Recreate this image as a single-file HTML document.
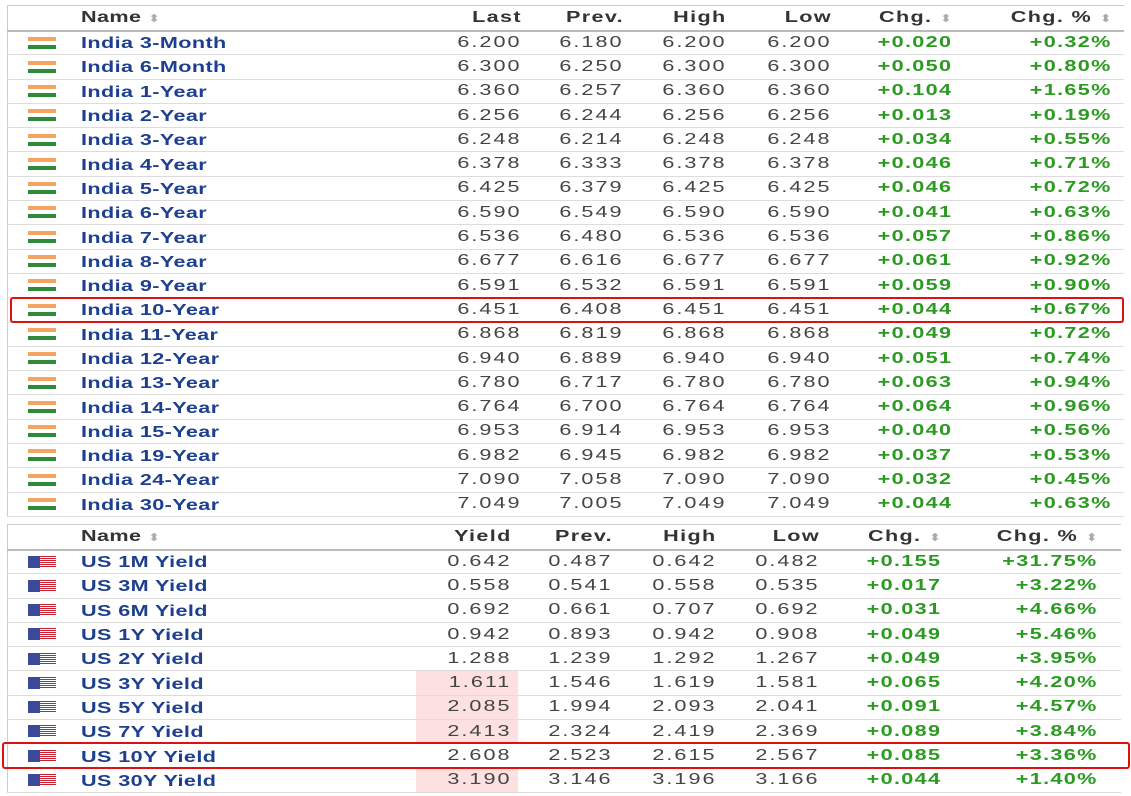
<!DOCTYPE html>
<html><head><meta charset="utf-8"><style>
body{margin:0;width:1131px;height:796px;background:#fff;position:relative;overflow:hidden;font-family:"Liberation Sans",Arial,sans-serif}
table{position:absolute;left:7px;border-collapse:collapse;table-layout:fixed;border-left:1px solid #ccc}
td,th{padding:0 6px 0 0;text-align:right;font-size:16px;letter-spacing:1.5px;color:#444;border-bottom:1px solid #ddd;white-space:nowrap;overflow:visible}
td i,th i{font-style:normal;display:inline-block;transform:scaleX(1.35);transform-origin:100% 50%}
th{font-weight:bold;color:#333;letter-spacing:1px;border-bottom:2px solid #bbb}
tr{height:24.3px}
td.n,th.n{text-align:left;padding:3px 0 0 8px;font-weight:bold;color:#1d3f8f;letter-spacing:0.3px}
td.n i,th.n i{transform-origin:0 50%}
th.n{color:#333;padding:0 0 0 8px}
td.g{color:#2a9a20;font-weight:bold;letter-spacing:1px}
td.f{padding:0 0 0 20px;text-align:left}
.s{color:#aaa;font-size:11px;letter-spacing:0;font-weight:normal}
.in{display:inline-block;width:28px;height:12px;background:linear-gradient(#f4a460 0,#f4a460 4px,#fff 4px,#fff 8px,#2e8b3a 8px);vertical-align:middle}
.us{display:inline-block;width:28px;height:12px;background:linear-gradient(90deg,#3b4a9a 0,#3b4a9a 12px,transparent 12px),repeating-linear-gradient(#c8202e 0,#c8202e 1px,#fff 1px,#fff 2px);vertical-align:middle}
.p{background:#fde0e0}
#t1{top:5px;border-top:1px solid #ccc}
#t2{top:524px;border-top:1px solid #ccc}
.box{position:absolute;border:2px solid #e01010}
</style></head><body>
<table id="t1">
<colgroup><col style="width:65px"><col style="width:348px"><col style="width:107px"><col style="width:102px"><col style="width:103px"><col style="width:105px"><col style="width:121px"><col style="width:159px"><col style="width:3px"></colgroup>
<tr style="height:25px"><th></th><th class="n"><i>Name <span class="s">⬍</span></i></th><th><i>Last</i></th><th><i>Prev.</i></th><th><i>High</i></th><th><i>Low</i></th><th><i>Chg. <span class="s">⬍</span></i></th><th><i>Chg. % <span class="s">⬍</span></i></th><th></th></tr>
<tr><td class="f"><span class="in"></span></td><td class="n"><i>India 3-Month</i></td><td><i>6.200</i></td><td><i>6.180</i></td><td><i>6.200</i></td><td><i>6.200</i></td><td class="g"><i>+0.020</i></td><td class="g"><i>+0.32%</i></td><td></td></tr>
<tr><td class="f"><span class="in"></span></td><td class="n"><i>India 6-Month</i></td><td><i>6.300</i></td><td><i>6.250</i></td><td><i>6.300</i></td><td><i>6.300</i></td><td class="g"><i>+0.050</i></td><td class="g"><i>+0.80%</i></td><td></td></tr>
<tr><td class="f"><span class="in"></span></td><td class="n"><i>India 1-Year</i></td><td><i>6.360</i></td><td><i>6.257</i></td><td><i>6.360</i></td><td><i>6.360</i></td><td class="g"><i>+0.104</i></td><td class="g"><i>+1.65%</i></td><td></td></tr>
<tr><td class="f"><span class="in"></span></td><td class="n"><i>India 2-Year</i></td><td><i>6.256</i></td><td><i>6.244</i></td><td><i>6.256</i></td><td><i>6.256</i></td><td class="g"><i>+0.013</i></td><td class="g"><i>+0.19%</i></td><td></td></tr>
<tr><td class="f"><span class="in"></span></td><td class="n"><i>India 3-Year</i></td><td><i>6.248</i></td><td><i>6.214</i></td><td><i>6.248</i></td><td><i>6.248</i></td><td class="g"><i>+0.034</i></td><td class="g"><i>+0.55%</i></td><td></td></tr>
<tr><td class="f"><span class="in"></span></td><td class="n"><i>India 4-Year</i></td><td><i>6.378</i></td><td><i>6.333</i></td><td><i>6.378</i></td><td><i>6.378</i></td><td class="g"><i>+0.046</i></td><td class="g"><i>+0.71%</i></td><td></td></tr>
<tr><td class="f"><span class="in"></span></td><td class="n"><i>India 5-Year</i></td><td><i>6.425</i></td><td><i>6.379</i></td><td><i>6.425</i></td><td><i>6.425</i></td><td class="g"><i>+0.046</i></td><td class="g"><i>+0.72%</i></td><td></td></tr>
<tr><td class="f"><span class="in"></span></td><td class="n"><i>India 6-Year</i></td><td><i>6.590</i></td><td><i>6.549</i></td><td><i>6.590</i></td><td><i>6.590</i></td><td class="g"><i>+0.041</i></td><td class="g"><i>+0.63%</i></td><td></td></tr>
<tr><td class="f"><span class="in"></span></td><td class="n"><i>India 7-Year</i></td><td><i>6.536</i></td><td><i>6.480</i></td><td><i>6.536</i></td><td><i>6.536</i></td><td class="g"><i>+0.057</i></td><td class="g"><i>+0.86%</i></td><td></td></tr>
<tr><td class="f"><span class="in"></span></td><td class="n"><i>India 8-Year</i></td><td><i>6.677</i></td><td><i>6.616</i></td><td><i>6.677</i></td><td><i>6.677</i></td><td class="g"><i>+0.061</i></td><td class="g"><i>+0.92%</i></td><td></td></tr>
<tr><td class="f"><span class="in"></span></td><td class="n"><i>India 9-Year</i></td><td><i>6.591</i></td><td><i>6.532</i></td><td><i>6.591</i></td><td><i>6.591</i></td><td class="g"><i>+0.059</i></td><td class="g"><i>+0.90%</i></td><td></td></tr>
<tr><td class="f"><span class="in"></span></td><td class="n"><i>India 10-Year</i></td><td><i>6.451</i></td><td><i>6.408</i></td><td><i>6.451</i></td><td><i>6.451</i></td><td class="g"><i>+0.044</i></td><td class="g"><i>+0.67%</i></td><td></td></tr>
<tr><td class="f"><span class="in"></span></td><td class="n"><i>India 11-Year</i></td><td><i>6.868</i></td><td><i>6.819</i></td><td><i>6.868</i></td><td><i>6.868</i></td><td class="g"><i>+0.049</i></td><td class="g"><i>+0.72%</i></td><td></td></tr>
<tr><td class="f"><span class="in"></span></td><td class="n"><i>India 12-Year</i></td><td><i>6.940</i></td><td><i>6.889</i></td><td><i>6.940</i></td><td><i>6.940</i></td><td class="g"><i>+0.051</i></td><td class="g"><i>+0.74%</i></td><td></td></tr>
<tr><td class="f"><span class="in"></span></td><td class="n"><i>India 13-Year</i></td><td><i>6.780</i></td><td><i>6.717</i></td><td><i>6.780</i></td><td><i>6.780</i></td><td class="g"><i>+0.063</i></td><td class="g"><i>+0.94%</i></td><td></td></tr>
<tr><td class="f"><span class="in"></span></td><td class="n"><i>India 14-Year</i></td><td><i>6.764</i></td><td><i>6.700</i></td><td><i>6.764</i></td><td><i>6.764</i></td><td class="g"><i>+0.064</i></td><td class="g"><i>+0.96%</i></td><td></td></tr>
<tr><td class="f"><span class="in"></span></td><td class="n"><i>India 15-Year</i></td><td><i>6.953</i></td><td><i>6.914</i></td><td><i>6.953</i></td><td><i>6.953</i></td><td class="g"><i>+0.040</i></td><td class="g"><i>+0.56%</i></td><td></td></tr>
<tr><td class="f"><span class="in"></span></td><td class="n"><i>India 19-Year</i></td><td><i>6.982</i></td><td><i>6.945</i></td><td><i>6.982</i></td><td><i>6.982</i></td><td class="g"><i>+0.037</i></td><td class="g"><i>+0.53%</i></td><td></td></tr>
<tr><td class="f"><span class="in"></span></td><td class="n"><i>India 24-Year</i></td><td><i>7.090</i></td><td><i>7.058</i></td><td><i>7.090</i></td><td><i>7.090</i></td><td class="g"><i>+0.032</i></td><td class="g"><i>+0.45%</i></td><td></td></tr>
<tr><td class="f"><span class="in"></span></td><td class="n"><i>India 30-Year</i></td><td><i>7.049</i></td><td><i>7.005</i></td><td><i>7.049</i></td><td><i>7.049</i></td><td class="g"><i>+0.044</i></td><td class="g"><i>+0.63%</i></td><td></td></tr>
</table>

<table id="t2">
<colgroup><col style="width:65px"><col style="width:343px"><col style="width:102px"><col style="width:101px"><col style="width:104px"><col style="width:103px"><col style="width:122px"><col style="width:156px"><col style="width:17px"></colgroup>
<tr style="height:25px"><th></th><th class="n"><i>Name <span class="s">⬍</span></i></th><th><i>Yield</i></th><th><i>Prev.</i></th><th><i>High</i></th><th><i>Low</i></th><th><i>Chg. <span class="s">⬍</span></i></th><th><i>Chg. % <span class="s">⬍</span></i></th><th></th></tr>
<tr><td class="f"><span class="us"></span></td><td class="n"><i>US 1M Yield</i></td><td><i>0.642</i></td><td><i>0.487</i></td><td><i>0.642</i></td><td><i>0.482</i></td><td class="g"><i>+0.155</i></td><td class="g"><i>+31.75%</i></td><td></td></tr>
<tr><td class="f"><span class="us"></span></td><td class="n"><i>US 3M Yield</i></td><td><i>0.558</i></td><td><i>0.541</i></td><td><i>0.558</i></td><td><i>0.535</i></td><td class="g"><i>+0.017</i></td><td class="g"><i>+3.22%</i></td><td></td></tr>
<tr><td class="f"><span class="us"></span></td><td class="n"><i>US 6M Yield</i></td><td><i>0.692</i></td><td><i>0.661</i></td><td><i>0.707</i></td><td><i>0.692</i></td><td class="g"><i>+0.031</i></td><td class="g"><i>+4.66%</i></td><td></td></tr>
<tr><td class="f"><span class="us"></span></td><td class="n"><i>US 1Y Yield</i></td><td><i>0.942</i></td><td><i>0.893</i></td><td><i>0.942</i></td><td><i>0.908</i></td><td class="g"><i>+0.049</i></td><td class="g"><i>+5.46%</i></td><td></td></tr>
<tr><td class="f"><span class="us"></span></td><td class="n"><i>US 2Y Yield</i></td><td><i>1.288</i></td><td><i>1.239</i></td><td><i>1.292</i></td><td><i>1.267</i></td><td class="g"><i>+0.049</i></td><td class="g"><i>+3.95%</i></td><td></td></tr>
<tr><td class="f"><span class="us"></span></td><td class="n"><i>US 3Y Yield</i></td><td class="p"><i>1.611</i></td><td><i>1.546</i></td><td><i>1.619</i></td><td><i>1.581</i></td><td class="g"><i>+0.065</i></td><td class="g"><i>+4.20%</i></td><td></td></tr>
<tr><td class="f"><span class="us"></span></td><td class="n"><i>US 5Y Yield</i></td><td class="p"><i>2.085</i></td><td><i>1.994</i></td><td><i>2.093</i></td><td><i>2.041</i></td><td class="g"><i>+0.091</i></td><td class="g"><i>+4.57%</i></td><td></td></tr>
<tr><td class="f"><span class="us"></span></td><td class="n"><i>US 7Y Yield</i></td><td class="p"><i>2.413</i></td><td><i>2.324</i></td><td><i>2.419</i></td><td><i>2.369</i></td><td class="g"><i>+0.089</i></td><td class="g"><i>+3.84%</i></td><td></td></tr>
<tr><td class="f"><span class="us"></span></td><td class="n"><i>US 10Y Yield</i></td><td><i>2.608</i></td><td><i>2.523</i></td><td><i>2.615</i></td><td><i>2.567</i></td><td class="g"><i>+0.085</i></td><td class="g"><i>+3.36%</i></td><td></td></tr>
<tr><td class="f"><span class="us"></span></td><td class="n"><i>US 30Y Yield</i></td><td class="p"><i>3.190</i></td><td><i>3.146</i></td><td><i>3.196</i></td><td><i>3.166</i></td><td class="g"><i>+0.044</i></td><td class="g"><i>+1.40%</i></td><td></td></tr>
</table>

<div class="box" style="left:10px;top:297px;width:1110px;height:22px;border-radius:3px"></div>
<div class="box" style="left:2px;top:742px;width:1124px;height:23px;border-radius:3px"></div>
</body></html>
